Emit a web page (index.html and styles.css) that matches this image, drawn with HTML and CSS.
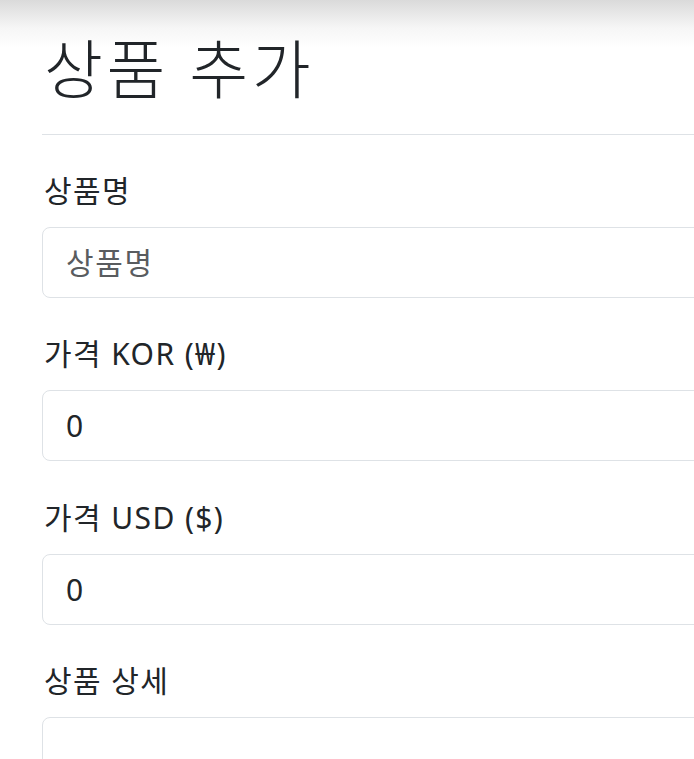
FILE: index.html
```html
<!DOCTYPE html>
<html lang="ko">
<head>
<meta charset="utf-8">
<title>상품 추가</title>
<link rel="stylesheet" href="styles.css">
</head>
<body>
<main class="container">
  <h1 class="title">상품 추가</h1>
  <hr class="divider">
  <form class="form">
    <div class="group">
      <label class="label" for="name">상품명</label>
      <input class="control" id="name" type="text" placeholder="상품명">
    </div>
    <div class="group">
      <label class="label" for="kor">가격 KOR (₩)</label>
      <input class="control" id="kor" type="text" value="0">
    </div>
    <div class="group">
      <label class="label" for="usd">가격 USD ($)</label>
      <input class="control" id="usd" type="text" value="0">
    </div>
    <div class="group">
      <label class="label" for="detail">상품 상세</label>
      <textarea class="control area" id="detail" rows="4"></textarea>
    </div>
  </form>
</main>
</body>
</html>
```
FILE: styles.css
```css
html {
  overflow: hidden;
}
body {
  margin: 0;
  background: linear-gradient(to bottom, #dadada 0px, #f6f6f6 28px, #ffffff 48px) no-repeat;
  background-color: #fff;
  color: #212529;
  font-family: "Noto Sans", "Noto Sans CJK KR", sans-serif;
}
.container {
  width: 1000px;
  padding-left: 42px;
}
.title {
  margin: 30px 0 27px 2px;
  font-size: 64px;
  font-weight: 300;
  line-height: 77px;
  letter-spacing: 3.6px;
}
.divider {
  margin: 0;
  border: 0;
  border-top: 1px solid #dee2e6;
}
.form {
  padding-top: 33px;
}
.group {
  display: flex;
  flex-direction: column;
  margin-bottom: 33.3px;
}
.label {
  margin: 0 0 14px 2px;
  font-size: 30px;
  line-height: 45px;
  letter-spacing: 1.4px;
}
.control {
  box-sizing: border-box;
  height: 71px;
  padding: 12px 22px 12px 23px;
  border: 1px solid #dee2e6;
  border-radius: 8px;
  background: #fff;
  color: #212529;
  font-family: inherit;
  font-size: 30px;
  line-height: 45px;
  letter-spacing: 1.6px;
  outline: none;
}
.control::placeholder {
  color: #595c5f;
}
.area {
  height: 160px;
  resize: none;
}
```
